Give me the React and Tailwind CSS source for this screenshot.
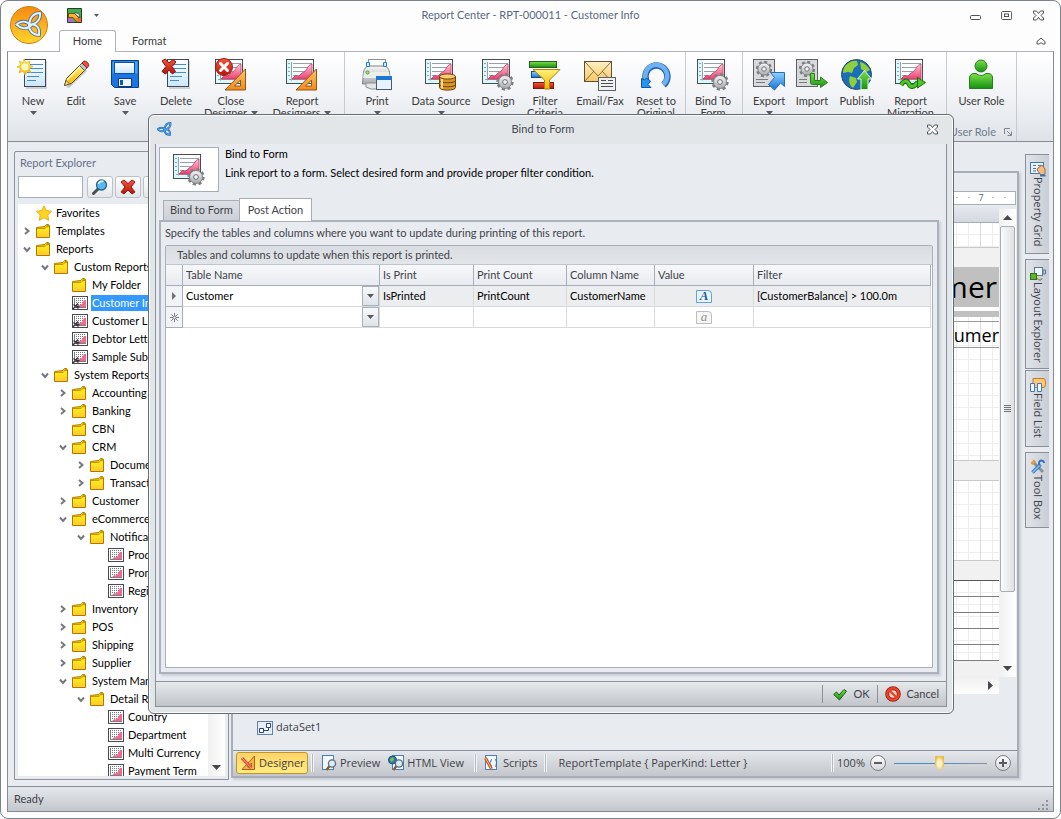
import React from "react";

const cx = (...parts) => parts.filter(Boolean).join(" ");

/* ---------- shared gradients ---------- */

function Gradients() {
  const stops = [
    ["gPink", "#ffc4d6", "#ee3f70"],
    ["gOrange", "#ffc66b", "#f08a1c"],
    ["gBlue", "#8fd0ff", "#1473d6"],
    ["gGreen", "#7be04a", "#149112"],
    ["gPaper", "#ffffff", "#cbe6fb"],
    ["gGray", "#f6f6f6", "#a9abad"],
    ["gYellow", "#fff27a", "#f4b400"],
    ["gRed", "#f4583f", "#b81408"],
    ["gMail", "#fff0c4", "#f6c766"],
    ["gFolder", "#ffff10", "#ffc62e"],
  ];
  return (
    <svg className="absolute h-0 w-0" aria-hidden="true">
      <defs>
        {stops.map(([id, a, b]) => (
          <linearGradient key={id} id={id} x1="0" y1="0" x2="0" y2="1">
            <stop offset="0" stopColor={a} />
            <stop offset="1" stopColor={b} />
          </linearGradient>
        ))}
      </defs>
    </svg>
  );
}

/* ---------- drawing pieces ---------- */

const Big = ({ children }) => (
  <svg className="h-[34px] w-[34px] shrink-0" viewBox="0 0 34 34" aria-hidden="true">{children}</svg>
);
const Small = ({ children }) => (
  <svg className="h-4 w-4 shrink-0" viewBox="0 0 16 16" aria-hidden="true">{children}</svg>
);

const ChartShape = () => (
  <g>
    <rect x="1.5" y="1.5" width="27" height="24" fill="#fbfeff" stroke="#4c4c50" />
    <path d="M2 2h4v23H2z" fill="#d5fbff" />
    <path d="M6 21h22v4H6z" fill="#d5fbff" />
    <path d="M6.500 4v18.500M4 21.500h23M8 5.500h19M8 9.500h19M8 13.500h19M8 17.500h19M3 5.500h2M3 9.500h2M3 13.500h2M3 17.500h2" fill="none" stroke="#9ba0a5" />
    <path d="M7 21l4-4 2 2 4-4c5-1 5-8 10-9v15z" fill="url(#gPink)" stroke="#c23a66" strokeWidth=".8" />
  </g>
);

const GearShape = ({ x, y, r }) => (
  <g transform={`translate(${x} ${y})`}>
    <circle r={r * 0.84} fill="none" stroke="#7b7e81" strokeWidth={r * 0.36} strokeDasharray={`${r * 0.36} ${r * 0.3}`} />
    <circle r={r * 0.76} fill="url(#gGray)" stroke="#808386" strokeWidth="1" />
    <circle r={r * 0.28} fill="#eef5fa" stroke="#6d7073" strokeWidth="1" />
  </g>
);

const TriSquare = () => (
  <path d="M31.500 11v21H11zM26.500 22l-6 6h6z" fill="url(#gOrange)" fillRule="evenodd" stroke="#915714" />
);

const LinesPaper = () => (
  <g>
    <rect x="8.500" y="1.500" width="21" height="28" fill="#9a9a9a" opacity=".4" transform="translate(1.500 1.500)" />
    <rect x="8.500" y="1.500" width="21" height="27" fill="url(#gPaper)" stroke="#3d4a56" />
    <path d="M14 6.500h13M14 10.500h13M11 14.500h16M11 18.500h12M11 22.500h9" stroke="#3f8fd8" />
  </g>
);

const Knot = ({ color, light, className }) => (
  <svg className={className} viewBox="0 0 28 28" aria-hidden="true">
    {[color, light].map((c, i) => (
      <g key={c} fill="none" stroke={c} strokeWidth={i ? 1.9 : 3.7}>
        <path d="M16 14.500C11 9 5 10 1.500 13.500c4 4 10 5.500 14.500 1z" />
        <path d="M14 14C15 6 19 2 25 2c1 6-3 11-11 12z" />
        <path d="M14 14c8-2 11 3 10 10-6 0-10-4-10-10z" />
      </g>
    ))}
  </svg>
);

const ICONS = {
  new: (
    <Big>
      <LinesPaper />
      <path d="M8 1l2 4 4-2-1 4 4 1.500-4 2 2 4-4-1.500-2 4-2-4-4 2 1.500-4.500L1 9l4-2-2-4 4 2z" fill="url(#gYellow)" stroke="#e2b517" strokeWidth=".7" />
      <circle cx="9" cy="9" r="3.600" fill="#fffbc0" />
    </Big>
  ),
  edit: (
    <Big>
      <path d="M7 29l3 1 18-17-2-2z" fill="#000" opacity=".2" />
      <path d="M5.500 27.500l2-7L22 6l5 5-14.500 14.500z" fill="url(#gYellow)" stroke="#5b4a16" />
      <path d="M8 22L22 8" stroke="#fff8b0" strokeWidth="1.600" />
      <path d="M20.500 7.500l2.500-2.500 5 5-2.500 2.500z" fill="#bfc4c8" stroke="#5c6064" />
      <path d="M23 5c2-3 4-2 5.500-.5s2 3.500-.5 5.500z" fill="#e5533c" stroke="#80281c" />
      <path d="M5.500 27.500l1.600-5 3.400 3.400z" fill="#f3d6a6" stroke="#5b4a16" strokeWidth=".7" />
    </Big>
  ),
  save: (
    <Big>
      <path d="M3.500 2.500h27v27h-24l-3-3z" fill="#1b74e0" stroke="#0b3c88" />
      <path d="M4.500 3.500h25v12h-25z" fill="#3fa0f5" />
      <rect x="6.500" y="4.500" width="20" height="11" fill="url(#gPaper)" stroke="#0b4fae" />
      <rect x="10.500" y="20.500" width="13" height="8" fill="#eef5fb" stroke="#0b3c88" />
      <rect x="12" y="22" width="3" height="5" fill="#1856a8" />
    </Big>
  ),
  delete: (
    <Big>
      <LinesPaper />
      <path d="M3 3l3.500-2L10 5l4-3.500L17 4l-4 4.500 3.500 5-3 2.500L10 12l-3.500 4-3.500-2.500L7 8.500z" fill="url(#gRed)" stroke="#7f120a" />
    </Big>
  ),
  closeDesigner: (
    <Big>
      <ChartShape />
      <TriSquare />
      <circle cx="10" cy="9" r="8.500" fill="url(#gRed)" stroke="#a51f12" />
      <path d="M6.500 5.500l7 7M13.500 5.500l-7 7" stroke="#fff" strokeWidth="3" strokeLinecap="round" />
    </Big>
  ),
  reportDesigners: <Big><ChartShape /><TriSquare /></Big>,
  print: (
    <Big>
      <rect x="8.500" y="1.500" width="17" height="10" fill="#fff" stroke="#8b8f94" />
      <path d="M3.500 14c1-4 3-6 6-6h14c3 0 5 2 6 6l1 12h-28z" fill="url(#gGray)" stroke="#7c8085" />
      <path d="M4 14h25l1 6H3z" fill="#eceded" />
      <path d="M6 25v4l5 2h8v-6z" fill="#e3e5e7" stroke="#8b8f94" />
      <path d="M6.500 4.500h3v4h-3zM23.500 4.500h3v4h-3z" fill="#cfe9ff" stroke="#1f82cf" />
      <circle cx="7.500" cy="14.500" r="1.600" fill="#a6e07c" stroke="#4b9e2a" />
      <rect x="16.500" y="18.500" width="15" height="13" fill="#e6f3fc" stroke="#4d5a66" />
      <path d="M16 18h16v4H16z" fill="#1d76d2" />
    </Big>
  ),
  dataSource: (
    <Big>
      <ChartShape />
      <path d="M15.500 18.500v11c0 3.500 16 3.500 16 0v-11z" fill="#d9952a" stroke="#704404" />
      <path d="M15.500 22.500c0 3 16 3 16 0M15.500 26.500c0 3 16 3 16 0" fill="none" stroke="#704404" />
      <path d="M18 21v9.500" stroke="#ffd88a" strokeWidth="2" />
      <ellipse cx="23.500" cy="18.500" rx="8" ry="2.600" fill="#f7cd7a" stroke="#704404" />
    </Big>
  ),
  design: <Big><ChartShape /><GearShape x={24} y={24} r={8.500} /></Big>,
  filter: (
    <Big>
      <rect x="1.500" y="3.500" width="27" height="6" fill="url(#gGreen)" stroke="#2c5a1c" />
      <rect x="3.500" y="13.500" width="12" height="6" fill="url(#gBlue)" stroke="#174a80" />
      <rect x="5.500" y="24.500" width="20" height="6" fill="url(#gRed)" stroke="#7a1b10" />
      <path d="M5 11.500h27L21.500 22v9h-5v-9z" fill="url(#gYellow)" stroke="#a98210" />
    </Big>
  ),
  email: (
    <Big>
      <rect x="1.500" y="3.500" width="27" height="20" fill="url(#gMail)" stroke="#5d4f38" />
      <path d="M2 4l13 14L28 4M2 23l9-10M28 23l-9-10" fill="none" stroke="#8d6d36" />
      <rect x="15.500" y="19.500" width="17" height="13" fill="#eef0f2" stroke="#5b6066" />
      <path d="M18 22.500h5M25 22.500h5M18 25.500h12M18 28.500h12" stroke="#4a4f55" />
    </Big>
  ),
  reset: (
    <Big>
      <path d="M24.500 27A11 11 0 1 0 7 22" fill="none" stroke="#2465ac" strokeWidth="6.500" />
      <path d="M24 26.500A11 11 0 1 0 7 22" fill="none" stroke="#6db2f2" strokeWidth="4.500" />
      <path d="M2.500 20.500v9h9.500l-3-3 2.500-3.500-4-3-2 2z" fill="#2394f0" stroke="#14559e" />
    </Big>
  ),
  export: (
    <Big>
      <rect x="1.500" y="1.500" width="21" height="27" fill="#d8dadc" stroke="#5d6166" />
      <GearShape x={12} y={11} r={8} />
      <path d="M4 21.500h12M4 24.500h9" stroke="#777b80" />
      <path d="M18.500 14.500h14v14l-4-3.500-6 7-6-5.500 6-7z" fill="url(#gBlue)" stroke="#2b6cae" />
    </Big>
  ),
  import: (
    <Big>
      <rect x="1.500" y="1.500" width="21" height="27" fill="#d8dadc" stroke="#5d6166" />
      <GearShape x={12} y={11} r={8} />
      <path d="M4 21.500h8M4 24.500h8" stroke="#777b80" />
      <path d="M15.500 15.500h4v7h6v-3.500l7 5.500-7 5v-3h-8c-1.500 0-2-1-2-2z" fill="url(#gGreen)" stroke="#2d7b1a" />
    </Big>
  ),
  publish: (
    <Big>
      <circle cx="16.500" cy="16.500" r="15" fill="#1b6eb8" stroke="#2a4a66" />
      <path d="M6 7c4-4 8-5 11-4l1 4-4 3-2 5-4-1-5 1c0-3 1-6 3-8zM20 4c4 1 8 4 10 8l-4 2-5-3zM10 18l6 2 1 4-4 6c-3-2-5-7-3-12z" fill="#8fcf3c" />
      <path d="M24.500 12.500l7 8.500h-3.500v10.500h-7V21h-3.500z" fill="url(#gGreen)" stroke="#e6f7dc" />
    </Big>
  ),
  migration: (
    <Big>
      <ChartShape />
      <path d="M7 27c3-5 6-5 8-1s5 3 9-2" fill="none" stroke="#1f6b12" strokeWidth="5" />
      <path d="M7 27c3-5 6-5 8-1s5 3 9-2" fill="none" stroke="#4ec62a" strokeWidth="3" />
      <path d="M23.500 19.500l8 5-8 5.500z" fill="#4ec62a" stroke="#1f6b12" />
    </Big>
  ),
  user: (
    <Big>
      <circle cx="16" cy="8" r="6" fill="url(#gGreen)" stroke="#2b7a1c" />
      <path d="M4.500 30.500V20c0-3 2-4.500 4.500-4.500h2c3 2.500 7 2.500 10 0h2c3 0 4.500 1.500 4.500 4.500v10.500z" fill="url(#gGreen)" stroke="#2b7a1c" />
    </Big>
  ),
};

const Folder = () => (
  <Small>
    <path d="M.5 4.500L9 3.500l1.500-2h2l1 1v12H.5z" fill="url(#gFolder)" stroke="#b17800" />
    <path d="M1 4.500h8.500L11 2h2v2l-3 .5L9 6H1z" fill="#d29400" />
  </Small>
);
const Star = () => (
  <Small>
    <path d="M8 .8l2.300 4.700 5.200.8-3.700 3.700.8 5.300L8 12.800l-4.700 2.500.9-5.300L.5 6.300l5.200-.8z" fill="#ffd61f" stroke="#e8a80c" strokeWidth=".9" />
  </Small>
);
const MiniChart = ({ tool }) => (
  <Small>
    <rect x=".5" y="1.500" width="15" height="13" fill="#fff" stroke="#4a4a4e" />
    <path d="M4 3.500h10M4 5.500h10M4 7.500h10M4 9.500h10" stroke="#777a7e" strokeDasharray="1 1" />
    <path d="M2.500 3v10M3 12.500h11" stroke="#7b7e82" />
    <path d="M4 12l2.500-2 1 .5L10 9l2-4h2v7z" fill="#f4678f" />
    {tool && <path d="M1 14l5-5.500M1.500 9.500l5 4M4 11.500h3.500" stroke="#33363a" strokeWidth="1.400" />}
  </Small>
);

const Down = ({ className = "" }) => (
  <svg className={cx("inline-block h-[4px] w-[7px] shrink-0", className)} viewBox="0 0 7 4" aria-hidden="true">
    <path d="M0 0h7L3.500 4z" fill="#55595f" />
  </svg>
);

const CloseGlyph = () => (
  <svg className="h-[11px] w-[13px]" viewBox="0 0 13 11" aria-hidden="true">
    <path d="M1.500 1h3l2 2.500 2-2.500h3v2L9 5.500l2.500 2.500v2h-3l-2-2.500-2 2.500h-3V8L4 5.500 1.500 3z" fill="#fff" stroke="#4f5257" />
  </svg>
);

/* ---------- ribbon ---------- */

const RIBBON = [
  {
    cls: "pr-1.5",
    items: [
      ["new", "w-[50px]", ["New"], "below"],
      ["edit", "w-9", ["Edit"]],
      ["save", "w-[62px]", ["Save"], "below"],
      ["delete", "w-10", ["Delete"]],
      ["closeDesigner", "w-[70px]", ["Close", "Designer"], "inline"],
      ["reportDesigners", "w-[72px]", ["Report", "Designers"], "inline"],
    ],
  },
  {
    cls: "pr-1.5",
    items: [
      ["print", "w-16", ["Print"], "below"],
      ["dataSource", "w-16", ["Data Source"], "below"],
      ["design", "w-[50px]", ["Design"]],
      ["filter", "w-11", ["Filter", "Criteria"]],
      ["email", "w-[66px]", ["Email/Fax"]],
      ["reset", "w-[46px]", ["Reset to", "Original"]],
    ],
  },
  { cls: "pr-0.5", items: [["design", "w-[54px]", ["Bind To", "Form"]]] },
  {
    cls: "pr-2.5",
    items: [
      ["export", "w-[52px]", ["Export"], "below"],
      ["import", "w-[34px]", ["Import"]],
      ["publish", "w-14", ["Publish"]],
      ["migration", "w-[51px]", ["Report", "Migration"]],
    ],
  },
  { cls: "", label: "User Role", items: [["user", "w-[69px]", ["User Role"]]] },
];

function Ribbon() {
  return (
    <div className="flex h-[91px] shrink-0 overflow-hidden border border-[#878c94] border-t-[#b0b5bb] bg-linear-to-b from-white via-[#f1f3f6] to-[#dfe3e8]">
      {RIBBON.map((g, gi) => (
        <div key={gi} className={cx("flex shrink-0 flex-col border-r border-[#c6cbd1]", g.cls)}>
          <div className="flex flex-1">
            {g.items.map(([icon, w, lines, arrow], i) => (
              <button key={i} type="button" className={cx("flex flex-col items-center pt-[6px] leading-[13px] whitespace-nowrap text-[#3b3b3b]", w)}>
                {ICONS[icon]}
                <span className="mt-[2px]">{lines[0]}</span>
                {lines[1] && (
                  <span className="flex items-center gap-1 leading-3">
                    {lines[1]}
                    {arrow === "inline" && <Down />}
                  </span>
                )}
                {arrow === "below" && <Down className="mt-1" />}
              </button>
            ))}
          </div>
          {g.label && (
            <div className="flex h-[18px] items-center justify-end gap-2 pr-1 text-[#6f7a8c]">
              {g.label}
              <svg className="h-2 w-2" viewBox="0 0 8 8" aria-hidden="true">
                <path d="M.5 6V.5H6M3 3l4 4M7.500 3.500v4h-4" fill="none" stroke="#7d848d" />
              </svg>
            </div>
          )}
        </div>
      ))}
    </div>
  );
}

/* ---------- title bar ---------- */

function Header() {
  return (
    <header className="relative flex h-[50px] shrink-0 flex-col">
      <button type="button" aria-label="Application menu" className="absolute top-[5px] left-[3px] flex h-[38px] w-[38px] items-center justify-center rounded-full border border-[#cf7a14] bg-linear-to-b from-[#f58a10] to-[#ffd52a]">
        <Knot className="h-7 w-7" color="#56708f" light="#dff0ff" />
      </button>
      <div className="flex h-[29px] items-center">
        <div className="flex w-[140px] items-center gap-3 pl-[60px]">
          <button type="button" aria-label="Open designer">
            <svg className="h-[15px] w-[15px]" viewBox="0 0 15 15" aria-hidden="true">
              <path d="M.5.500h14v14H.5z" fill="#3fae4c" stroke="#2e3a30" />
              <path d="M1 10h4l2 4H1z" fill="#b769c4" />
              <path d="M1.500 5.500h6l6 6v2.500H10L6 9.500H1.500z" fill="#ffb224" stroke="#5b3b06" strokeWidth=".8" />
              <path d="M8 10l4 4h2v-4z" fill="#ee6e2a" />
              <path d="M8 4.500l4 1.500 1 4-5-4z" fill="#fff" stroke="#2a3c55" strokeWidth=".7" />
            </svg>
          </button>
          <button type="button" aria-label="Customize toolbar" className="flex">
            <svg className="h-[3px] w-[5px]" viewBox="0 0 5 3"><path d="M0 0h5L2.500 3z" fill="#55595f" /></svg>
          </button>
        </div>
        <h1 className="flex-1 truncate text-center text-[#5a6884]">Report Center - RPT-000011 - Customer Info</h1>
        <div className="flex w-[140px] items-center justify-end gap-5 pr-[9px]">
          <button type="button" aria-label="Minimize"><svg className="h-[11px] w-[11px]" viewBox="0 0 11 11"><rect x=".5" y="5.500" width="10" height="4" rx="1" fill="#fff" stroke="#4f5257" /></svg></button>
          <button type="button" aria-label="Restore"><svg className="h-[11px] w-[11px]" viewBox="0 0 11 11"><rect x=".6" y="1.500" width="10" height="8" rx="1" fill="#fff" stroke="#4f5257" /><rect x="3.500" y="4" width="4" height="2.500" fill="none" stroke="#4f5257" /></svg></button>
          <button type="button" aria-label="Close"><CloseGlyph /></button>
        </div>
      </div>
      <div className="flex h-[21px] items-end pl-[52px]">
        <button type="button" className="relative -mb-px h-[22px] w-[57px] rounded-t-[3px] border border-b-0 border-[#b0b5bb] bg-white text-[#3b3b3b]">Home</button>
        <button type="button" className="h-[19px] px-4 text-[#3b3b3b]">Format</button>
        <button type="button" aria-label="Collapse ribbon" className="mr-2 mb-1.5 ml-auto">
          <svg className="h-[8px] w-[10px]" viewBox="0 0 10 8"><path d="M1 4.500l4-3.500 4 3.500v2.500H6.500L5 5.500 3.500 7H1z" fill="#fff" stroke="#4f5257" /></svg>
        </button>
      </div>
    </header>
  );
}

/* ---------- explorer ---------- */

const TREE = [
  [0, "", "star", "Favorites"],
  [0, ">", "folder", "Templates"],
  [0, "v", "folder", "Reports"],
  [1, "v", "folder", "Custom Reports"],
  [2, "", "folder", "My Folder"],
  [2, "", "tool", "Customer Info", true],
  [2, "", "tool", "Customer List"],
  [2, "", "tool", "Debtor Letter"],
  [2, "", "tool", "Sample Sub Report"],
  [1, "v", "folder", "System Reports"],
  [2, ">", "folder", "Accounting"],
  [2, ">", "folder", "Banking"],
  [2, "", "folder", "CBN"],
  [2, "v", "folder", "CRM"],
  [3, ">", "folder", "Document"],
  [3, ">", "folder", "Transaction"],
  [2, ">", "folder", "Customer"],
  [2, "v", "folder", "eCommerce"],
  [3, "v", "folder", "Notification"],
  [4, "", "chart", "Product"],
  [4, "", "chart", "Promotion"],
  [4, "", "chart", "Registration"],
  [2, ">", "folder", "Inventory"],
  [2, ">", "folder", "POS"],
  [2, ">", "folder", "Shipping"],
  [2, ">", "folder", "Supplier"],
  [2, "v", "folder", "System Manager"],
  [3, "v", "folder", "Detail Report"],
  [4, "", "chart", "Country"],
  [4, "", "chart", "Department"],
  [4, "", "chart", "Multi Currency"],
  [4, "", "chart", "Payment Term"],
];
const INDENT = ["pl-0", "pl-[18px]", "pl-9", "pl-[54px]", "pl-[72px]"];
const TREE_ICON = { star: <Star />, folder: <Folder />, tool: <MiniChart tool />, chart: <MiniChart /> };

const toolBtn = "flex h-[22px] w-[26px] shrink-0 items-center justify-center rounded-[3px] border border-[#bcc1c8] bg-linear-to-b from-white to-[#e3e6ea]";

function Explorer() {
  return (
    <aside className="mt-[9px] mb-1.5 ml-1.5 flex w-[215px] shrink-0 flex-col rounded-t-[2px] border border-[#8a929c] pr-[3px] pb-[3px] pl-[3px]">
      <h2 className="flex h-[23px] shrink-0 items-center pl-[2px] text-[#65718a]">Report Explorer</h2>
      <div className="flex h-[29px] shrink-0 items-start gap-[2px] overflow-hidden pt-[1px]">
        <input aria-label="Search reports" className="mr-[2px] h-[22px] w-[65px] border border-[#a4adb8] bg-white px-1 outline-none" />
        <button type="button" aria-label="Find" className={toolBtn}>
          <Small>
            <path d="M1.500 14.500l5-5" stroke="#44505a" strokeWidth="3" strokeLinecap="round" />
            <circle cx="9.500" cy="6" r="5" fill="#58b8f0" stroke="#2a5f88" strokeWidth="1.300" />
            <path d="M6.500 5a3.500 3.500 0 0 1 5-2.500" stroke="#e5f7ff" strokeWidth="1.500" fill="none" />
          </Small>
        </button>
        <button type="button" aria-label="Clear" className={toolBtn}>
          <Small><path d="M1 3l3-2 4 3.500L12 1l3 2-4 5 4 5-3 2-4-4-4 4-3-2 4-5z" fill="url(#gRed)" stroke="#8e1a12" /></Small>
        </button>
        <button type="button" aria-label="Refresh" className={toolBtn} />
      </div>
      <div className="flex min-h-0 flex-1 bg-white">
        <ul className="min-w-0 flex-1 overflow-hidden">
          {TREE.map(([lvl, arrow, icon, label, sel], i) => (
            <li key={i} className={cx("flex h-[18px] items-center whitespace-nowrap text-black", INDENT[lvl])}>
              <span className="flex w-[18px] shrink-0 justify-center">
                {arrow && (
                  <svg className="h-2 w-2" viewBox="0 0 8 8" aria-hidden="true">
                    <path d={arrow === ">" ? "M2 1l3.500 3L2 7" : "M1 2.500L4 6l3-3.500"} fill="none" stroke="#747981" strokeWidth="2" />
                  </svg>
                )}
              </span>
              {TREE_ICON[icon]}
              <button type="button" className={cx("ml-[3px] h-4 pr-0.5 pl-px leading-4", sel && "bg-[#3399ff] text-white")}>{label}</button>
            </li>
          ))}
        </ul>
        <div className="flex w-[17px] flex-col items-center justify-end bg-linear-to-r from-[#f0f0f1] to-white pb-[6px]">
          <svg className="h-[5px] w-[9px]" viewBox="0 0 9 5" aria-hidden="true"><path d="M0 0h9L4.500 5z" fill="#44474c" /></svg>
        </div>
      </div>
    </aside>
  );
}

/* ---------- designer surface ---------- */

const grid = "bg-white bg-[linear-gradient(to_left,transparent_18px,#dcdcde_18px,#dcdcde_19px,transparent_19px),linear-gradient(to_left,transparent_6px,#eeeeef_6px,#eeeeef_7px,transparent_7px),linear-gradient(to_bottom,transparent_11px,#eeeeef_11px)] bg-[length:48px_48px,12px_12px,12px_12px] bg-[position:right_top,right_top,right_top]";
const sans = "font-['Open_Sans','Noto_Sans',sans-serif]";

function Surface() {
  return (
    <div className="flex min-w-0 flex-1 flex-col overflow-hidden">
      <div className="h-[18px] shrink-0 border-b border-[#a3abb6] bg-linear-to-b from-[#e8ebf0] to-[#d3d8df]" />
      <div className={cx("h-6 shrink-0", grid)} />
      <div className="h-5 shrink-0 border-t border-[#c9c9c9] bg-[#f1f1f1]" />
      <div className={cx("flex h-10 shrink-0 items-center justify-end bg-[#c0c0c0] pr-0.5 text-[30px] leading-10 text-black", sans)}>Customer</div>
      <div className="h-1 shrink-0 bg-white" />
      <div className="h-1.5 shrink-0 bg-[#c0c0c0]" />
      <div className={cx("h-1 shrink-0", grid)} />
      <div className={cx("flex h-[27px] shrink-0 items-center justify-end border-y border-[#9a9a9a] text-[18px] leading-6 text-black", grid, sans)}>Consumer</div>
      <div className={cx("h-28 shrink-0", grid)} />
      <div className="h-[21px] shrink-0 border-y border-[#c9c9c9] bg-[#f1f1f1]" />
      <div className={cx("h-[79px] shrink-0", grid)} />
      <div className="h-[20px] shrink-0 border-t border-[#c9c9c9] bg-[#f1f1f1]" />
      <div className={cx("shrink-0 border-t border-[#55575a]", grid)}>
        {["r1", "r2", "r3", "r4", "r5"].map((k) => (
          <div key={k} className="h-[16px] border-b border-[#7b7d80]" />
        ))}
      </div>
      <div className="flex-1 bg-[#f1f1f1]" />
    </div>
  );
}

const Divider = () => <span className="mx-[3px] h-[18px] w-[3px] shrink-0 border-x border-x-[#f4f5f6] bg-[#b4b8be]" />;

const BarIcon = ({ kind }) => (
  <Small>
    {kind !== "designer" && <rect x={kind === "html" ? 4.5 : 1.5} y=".5" width="11" height="14" fill="#f3f8fd" stroke="#4b7fb5" />}
    {kind === "designer" && (
      <g>
        <path d="M14.500 1v13.500H2zM11.500 8l-4 4h4z" fill="#f7b04a" fillRule="evenodd" stroke="#b0621a" />
        <path d="M2 3l9 10" stroke="#d04a3a" strokeWidth="3" />
        <path d="M2 3l9 10" stroke="#f3a38f" />
      </g>
    )}
    {kind === "html" && (
      <g>
        <circle cx="4.500" cy="5" r="4" fill="#2d78b8" stroke="#274f70" />
        <path d="M2 4l3-2 1 3-3 2z" fill="#7ec93a" />
      </g>
    )}
    {(kind === "preview" || kind === "html") && (
      <g>
        <path d="M5.500 15l3-4" stroke="#8c5a2c" strokeWidth="2.400" />
        <circle cx="11" cy="8.500" r="3.600" fill="#d9ecfa" stroke="#5d6c7a" strokeWidth="1.300" />
      </g>
    )}
    {kind === "scripts" && (
      <g>
        <path d="M8 4.500c-2 0-.5 3-2.500 3.500 2 .5.5 3.500 2.500 3.500M11 4.500c2 0 .5 3 2 3.500-1.500.5 0 3.500-2 3.500" fill="none" stroke="#2d6fbd" />
        <path d="M1.500 3l6 11" stroke="#c6542c" strokeWidth="3" />
        <path d="M1.500 3l6 11" stroke="#ffb36b" />
      </g>
    )}
  </Small>
);

function ViewButton({ kind, children }) {
  return (
    <button type="button" className="flex h-[22px] items-center gap-[3px] px-1">
      <BarIcon kind={kind} />
      {children}
    </button>
  );
}

const Round = ({ label, plus }) => (
  <button type="button" aria-label={label} className="flex h-4 w-4 shrink-0 items-center justify-center rounded-full border border-[#7b7f88] bg-linear-to-b from-white to-[#d4d7dc]">
    <svg className="h-[8px] w-[8px]" viewBox="0 0 8 8" aria-hidden="true">
      <path d={plus ? "M0 4h8M4 0v8" : "M0 4h8"} stroke="#5a5d64" strokeWidth="2" />
    </svg>
  </button>
);

function Designer() {
  return (
    <main className="mt-[29px] mb-2 ml-[2px] flex min-w-0 flex-1 flex-col border-2 border-[#a8aeb8] shadow-[2px_2px_2px_#c9cdd4]">
      <div className="h-[18px] shrink-0" />
      <div className={cx("mr-px flex h-[14px] shrink-0 items-center justify-end overflow-hidden border border-[#a8aeb6] bg-white pr-1 text-[9px] text-[#5a5f66]", sans)}>
        {["·", "·", "·", "·", "7", "·", "·"].map((t, i) => (
          <span key={i} className="w-3 text-center">{t}</span>
        ))}
      </div>
      <div className="flex min-h-0 flex-1 pr-px">
        <Surface />
        <div className="mt-1 flex w-[17px] shrink-0 flex-col items-center bg-linear-to-r from-[#f0f0f1] to-white pt-1.5 pb-[6px]">
          <svg className="h-[5px] w-[9px]" viewBox="0 0 9 5" aria-hidden="true"><path d="M0 5h9L4.500 0z" fill="#44474c" /></svg>
          <div className="mt-1.5 flex w-[15px] flex-[366] flex-col items-center justify-center gap-px rounded-[2px] border border-[#a9adb4] bg-linear-to-r from-[#fafafa] to-[#dfe1e3]">
            {["a", "b", "c", "d"].map((k) => <i key={k} className="h-px w-[7px] bg-[#6f737a]" />)}
          </div>
          <div className="flex-[75]" />
          <svg className="h-[5px] w-[9px]" viewBox="0 0 9 5" aria-hidden="true"><path d="M0 0h9L4.500 5z" fill="#44474c" /></svg>
        </div>
      </div>
      <div className="mr-[18px] flex h-[17px] shrink-0 items-center justify-end bg-linear-to-b from-[#f0f0f1] to-white pr-[6px]">
        <svg className="h-[9px] w-[5px]" viewBox="0 0 5 9" aria-hidden="true"><path d="M0 0v9l5-4.500z" fill="#44474c" /></svg>
      </div>
      <div className={cx("flex h-14 shrink-0 items-center gap-[3px] pt-[11px] pl-6 text-[#3f4248]", sans)}>
        <Small>
          <rect x=".5" y="1.500" width="15" height="13" fill="#e6edf8" stroke="#6c7fa3" />
          <path d="M2.500 8.500h4v4h-4zM9.500 3.500h4v4h-4zM6.500 10.500h5v-3" fill="#fff" stroke="#27457f" />
        </Small>
        dataSet1
      </div>
      <div className={cx("flex h-[26px] shrink-0 items-center border-t border-[#8a929c] bg-linear-to-b from-[#e4e7eb] to-[#c3c7cd] pr-1.5 pb-px pl-[3px] whitespace-nowrap text-[#3f3f46]", sans)}>
        <button type="button" className="flex h-[22px] w-[72px] items-center gap-[3px] rounded-[3px] border border-[#c2922e] bg-linear-to-b from-[#ffd465] to-[#ffec80] pl-[3px]">
          <BarIcon kind="designer" />Designer
        </button>
        <Divider />
        <ViewButton kind="preview">Preview</ViewButton>
        <ViewButton kind="html">HTML View</ViewButton>
        <span className="w-[3px]" />
        <Divider />
        <ViewButton kind="scripts">Scripts</ViewButton>
        <Divider />
        <span className="ml-2 flex-1">{"ReportTemplate { PaperKind: Letter }"}</span>
        <Divider />
        <label htmlFor="zoom" className="mr-[5px]">100%</label>
        <Round label="Zoom out" />
        <input
          id="zoom"
          type="range"
          min="0"
          max="100"
          defaultValue="49"
          className="mx-2 h-4 w-[93px] appearance-none bg-transparent [&::-webkit-slider-runnable-track]:h-px [&::-webkit-slider-runnable-track]:bg-linear-to-r [&::-webkit-slider-runnable-track]:from-[#4a8cc8] [&::-webkit-slider-runnable-track]:via-[#4a8cc8] [&::-webkit-slider-runnable-track]:to-[#8a92a0] [&::-webkit-slider-thumb]:-mt-[7px] [&::-webkit-slider-thumb]:h-[15px] [&::-webkit-slider-thumb]:w-[9px] [&::-webkit-slider-thumb]:appearance-none [&::-webkit-slider-thumb]:bg-[radial-gradient(#fdf3c8_30%,#e8b93c_75%)] [&::-webkit-slider-thumb]:[clip-path:polygon(0_0,100%_0,100%_70%,50%_100%,0_70%)]"
        />
        <Round label="Zoom in" plus />
      </div>
    </main>
  );
}

/* ---------- side tabs ---------- */

const SIDE = [
  ["Property Grid", "h-[100px]", (
    <g>
      <rect x=".5" y="1.500" width="13" height="11" fill="#eaf3fc" stroke="#3f78b6" />
      <path d="M3 4.500h3M8 4.500h3M3 7.500h3M8 7.500h3M3 10h3" stroke="#3f78b6" />
      <path d="M7 9l1-2 4-3 3 4v5l-4 1z" fill="#f2bd86" stroke="#a86b33" />
      <path d="M10 13.500h5.500v2H10z" fill="#2f74bf" />
    </g>
  )],
  ["Layout Explorer", "mt-[5px] h-[110px]", (
    <g>
      <rect x="4.500" y="1.500" width="8" height="8" fill="#eef4fa" stroke="#5d7896" />
      <path d="M13 4h2.500v4H13zM6 11c2 4 6 4 6 1" fill="#f7c06a" stroke="#3a7dc4" />
      <rect x=".5" y="7.500" width="6" height="6" fill="#58b62c" stroke="#2c7412" />
    </g>
  )],
  ["Field List", "mt-px h-[77px]", (
    <g>
      <path d="M3 1.500h11c2 0 2 9 0 9H3z" fill="#ffc777" stroke="#c57e22" />
      <path d="M.5 6.500h4v8h-4zM7.500 6.500h4v8h-4z" fill="#f2f8ff" stroke="#3a7dc4" />
    </g>
  )],
  ["Tool Box", "mt-[5px] h-[76px]", (
    <g fill="none">
      <path d="M3 3l10 10" stroke="#8a8f96" strokeWidth="3" />
      <path d="M1.500 5L5 1.500" stroke="#e39a3f" strokeWidth="3" />
      <path d="M2.500 13.500l8-8" stroke="#2f74bf" strokeWidth="3.400" />
      <path d="M2.500 13.500l8-8" stroke="#8cc3f5" strokeWidth="1.600" />
      <path d="M10 6a2.500 2.500 0 1 1 4-2" stroke="#2f74bf" strokeWidth="2" />
    </g>
  )],
];

function SideTabs() {
  return (
    <nav className="mt-3 mr-1 ml-1.5 flex w-6 shrink-0 flex-col">
      {SIDE.map(([name, size, art]) => (
        <button key={name} type="button" className={cx("flex shrink-0 flex-col items-center border border-r-0 border-[#8a9099] bg-linear-to-r from-[#e1e4e9] to-[#c9cdd5] pt-[6px] text-[#3f4248]", sans, size)}>
          <Small>{art}</Small>
          <span className="leading-4 whitespace-nowrap [writing-mode:vertical-rl]">{name}</span>
        </button>
      ))}
    </nav>
  );
}

/* ---------- dialog ---------- */

const th = "h-[21px] border-r border-b border-[#a4adb8] bg-linear-to-b from-[#f7f8fa] to-[#e8ebf0] px-[3px] text-left font-normal text-[#3f4248]";
const td = "h-[21px] border-r border-b border-[#d7dadd] px-[3px]";

function TableNameCell({ value }) {
  return (
    <td className="h-[21px] border-r border-b border-[#d7dadd] bg-white p-0">
      <div className="relative flex h-5">
        <select aria-label="Table Name" defaultValue={value} className="h-5 w-full appearance-none bg-transparent pr-5 pl-[3px] text-black outline-none">
          <option>{value}</option>
        </select>
        <span className="pointer-events-none absolute inset-y-0 right-0 flex w-[17px] items-center justify-center border border-[#aab1ba] bg-linear-to-b from-[#f8f9fa] to-[#dfe3e8]">
          <Down />
        </span>
      </div>
    </td>
  );
}

const ValueIcon = ({ letter, on }) => (
  <span className={cx("mx-auto flex h-[13px] w-4 items-center justify-center rounded-tr-[4px] border font-['Liberation_Serif',serif] text-[13px] leading-3 italic", on ? "border-[#5ea2ea] bg-[#e9f4ff] font-bold text-[#245b9c]" : "border-[#bdbdbd] bg-[#f7f7f7] text-[#8e8e8e]")}>{letter}</span>
);

function Dialog() {
  return (
    <section role="dialog" aria-label="Bind to Form" className="absolute top-[113px] right-[106px] bottom-[104px] left-[147px] flex flex-col rounded-[6px] border border-[#666d75] bg-[#e3e6e9] px-1.5 pb-1.5 shadow-[inset_0_0_0_1px_#f8f9fa]">
      <div className="flex h-[29px] shrink-0 items-center">
        <Knot className="ml-[2px] h-[15px] w-[15px]" color="#1a5fae" light="#4fa6ee" />
        <h2 className="flex-1 pr-3 text-center text-[#3f4854]">Bind to Form</h2>
        <button type="button" aria-label="Close dialog" className="mr-2"><CloseGlyph /></button>
      </div>
      <div className="flex min-h-0 flex-1 flex-col border-x border-[#8a929c] bg-[#e8ebf0] pt-[3px] pr-[7px] pb-[7px] pl-[3px]">
        <div className="flex shrink-0 gap-1.5 text-black">
          <div className="flex h-[45px] w-[60px] items-center justify-center border border-[#a4adb8] bg-white">{ICONS.design}</div>
          <div className="leading-[14px]">
            <p>Bind to Form</p>
            <p className="mt-[5px]">Link report to a form. Select desired form and provide proper filter condition.</p>
          </div>
        </div>
        <div className="mt-1.5 flex shrink-0 items-end pl-1">
          <button type="button" className="h-[20px] w-[76px] border border-r-0 border-b-0 border-[#a4adb8] bg-linear-to-b from-[#dcdfe4] to-[#cdd1d7] text-[#3f4248]">Bind to Form</button>
          <button type="button" className="relative -mb-px h-[23px] w-[73px] border border-b-0 border-[#a4adb8] bg-white text-[#3f4248]">Post Action</button>
        </div>
        <div className="flex min-h-0 flex-1 flex-col border-2 border-[#abb2bd] px-1 pb-1 shadow-[2px_2px_2px_#ccd0d7]">
          <p className="flex h-[23px] shrink-0 items-center text-[#3f4248]">Specify the tables and columns where you want to update during printing of this report.</p>
          <div className="flex min-h-0 flex-1 flex-col rounded-t-[2px] border border-[#a9b0ba] bg-white">
            <h3 className="flex h-[19px] shrink-0 items-center border-b border-[#c0c5cc] bg-linear-to-b from-[#d9dce1] to-[#e2e5e9] pl-[11px] text-[#3f4248]">Tables and columns to update when this report is printed.</h3>
            <div className="pr-px">
              <table className="w-full table-fixed border-separate border-spacing-0 text-black">
                <colgroup>
                  <col className="w-[17px]" />
                  <col className="w-[197px]" />
                  <col className="w-[94px]" />
                  <col className="w-[93px]" />
                  <col className="w-[88px]" />
                  <col className="w-[99px]" />
                  <col />
                </colgroup>
                <thead>
                  <tr>
                    <th className={th} aria-label="Row state" />
                    {["Table Name", "Is Print", "Print Count", "Column Name", "Value", "Filter"].map((h) => (
                      <th key={h} className={th}>{h}</th>
                    ))}
                  </tr>
                </thead>
                <tbody>
                  <tr className="bg-[#ecedef]">
                    <td className="border-r border-b border-[#a4adb8] bg-[#f1f3f6]">
                      <svg className="mx-auto block h-[8px] w-[4px]" viewBox="0 0 4 8" aria-hidden="true"><path d="M0 0v8l4-4z" fill="#6d727a" /></svg>
                    </td>
                    <TableNameCell value="Customer" />
                    <td className={td}>IsPrinted</td>
                    <td className={td}>PrintCount</td>
                    <td className={td}>CustomerName</td>
                    <td className={td}><ValueIcon letter="A" on /></td>
                    <td className={td}>[CustomerBalance] &gt; 100.0m</td>
                  </tr>
                  <tr>
                    <td className="border-r border-b border-[#a4adb8] bg-[#f1f3f6]">
                      <svg className="mx-auto block h-[9px] w-[9px]" viewBox="0 0 9 9" aria-hidden="true">
                        <path d="M4.500 0v9M0 4.500h9M1.300 1.300l6.400 6.400M7.700 1.300L1.300 7.700" stroke="#6d727a" strokeWidth=".9" />
                        <circle cx="4.500" cy="4.500" r="1.500" fill="#f1f3f6" stroke="#6d727a" strokeWidth=".8" />
                      </svg>
                    </td>
                    <TableNameCell value="" />
                    <td className={td} />
                    <td className={td} />
                    <td className={td} />
                    <td className={td}><ValueIcon letter="a" /></td>
                    <td className={td} />
                  </tr>
                </tbody>
              </table>
            </div>
          </div>
        </div>
      </div>
      <div className="flex h-[26px] shrink-0 items-center justify-end border border-[#8a929c] bg-linear-to-b from-[#e6e9ec] to-[#c1c5ca] text-[#3f4248]">
        <button type="button" className="flex h-[18px] items-center gap-1.5 border-l border-[#8a929c] pr-2 pl-[10px]">
          <svg className="h-[13px] w-[14px]" viewBox="0 0 14 13" aria-hidden="true"><path d="M.7 6.500L3.500 4l2.500 3L11 1.500l2.500 1.700L6.500 12z" fill="url(#gGreen)" stroke="#155c12" /></svg>
          OK
        </button>
        <button type="button" className="flex h-[18px] items-center gap-[5px] border-l border-[#8a929c] px-[7px]">
          <Small>
            <circle cx="8" cy="8" r="5.800" fill="#f7d6cf" stroke="#8e1f12" strokeWidth="4" />
            <circle cx="8" cy="8" r="5.800" fill="none" stroke="#ea4426" strokeWidth="2.400" />
            <path d="M4 4l8 8" stroke="#ea4426" strokeWidth="2.400" />
          </Small>
          Cancel
        </button>
      </div>
    </section>
  );
}

/* ---------- page ---------- */

export default function App() {
  return (
    <div className="relative flex h-screen flex-col overflow-hidden rounded-[8px] border border-[#7d838b] bg-[#fdfdfe] px-1.5 pb-1.5 font-['Lato',sans-serif] text-[11px]">
      <Gradients />
      <Header />
      <Ribbon />
      <div className="flex min-h-0 flex-1 border-x border-[#878c94] bg-[#e8ebf0]">
        <Explorer />
        <Designer />
        <SideTabs />
      </div>
      <footer className="flex h-[26px] shrink-0 items-center justify-between border border-[#878c94] bg-linear-to-b from-[#e5e8ec] to-[#c3c7cd] pr-1 pl-1.5 text-[#3f4248]">
        <span>Ready</span>
        <svg className="mt-3 h-[11px] w-[11px]" viewBox="0 0 11 11" aria-hidden="true">
          <path d="M8 0h2v2H8zM4 4h2v2H4zM8 4h2v2H8zM0 8h2v2H0zM4 8h2v2H4zM8 8h2v2H8z" fill="#8f949b" />
        </svg>
      </footer>
      <Dialog />
    </div>
  );
}
